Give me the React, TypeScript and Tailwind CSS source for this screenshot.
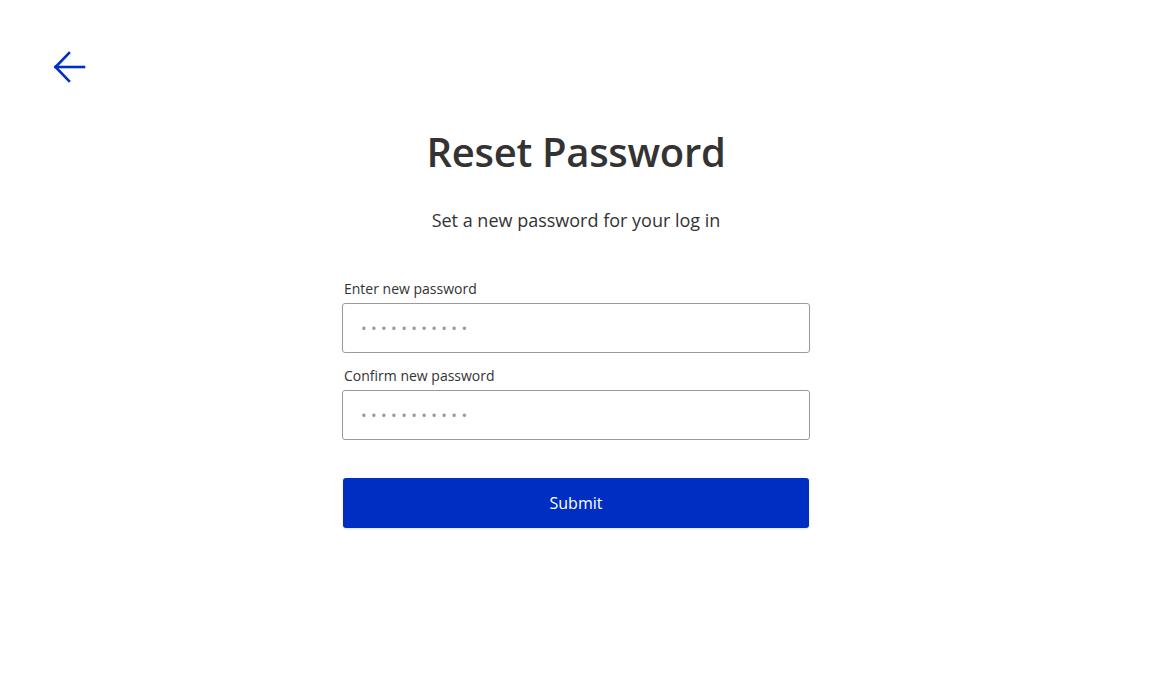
export default function App() {
  return (
    <div className="min-h-[700px] w-full bg-white text-[#333333]" style={{ fontFamily: '"Open Sans", "Noto Sans", sans-serif' }}>
      <div className="px-[53px] pt-[51px]">
        <button className="block text-[#0030c0]" aria-label="Back">
          <svg width="34" height="32" viewBox="0 0 34 32" fill="none" stroke="currentColor" strokeWidth="2.6" strokeLinecap="square">
            <path d="M2.5 16 H31" />
            <path d="M16 2 L2.5 16 L16 30" />
          </svg>
        </button>
      </div>

      <div className="flex flex-col items-center">
        <h1 className="mt-[45px] text-[40px] leading-[48px] font-semibold tracking-[-0.3px]">Reset Password</h1>
        <p className="mt-[32px] text-[18px] leading-[24px]">Set a new password for your log in</p>

        <form className="mt-[48px] flex w-[468px] flex-col" onSubmit={(e) => e.preventDefault()}>
          <label className="ml-[2px] text-[14px] leading-[18px]">Enter new password</label>
          <input
            type="text"
            placeholder="•••••••••••"
            className="mt-[5px] h-[50px] rounded-[3px] border border-[#9a9a9a] px-[18px] text-[15px] tracking-[4.4px] outline-none placeholder:text-[#999999]"
          />

          <label className="ml-[2px] mt-[14px] text-[14px] leading-[18px]">Confirm new password</label>
          <input
            type="text"
            placeholder="•••••••••••"
            className="mt-[5px] h-[50px] rounded-[3px] border border-[#9a9a9a] px-[18px] text-[15px] tracking-[4.4px] outline-none placeholder:text-[#999999]"
          />

          <button
            type="submit"
            className="mx-[1px] mt-[38px] h-[50px] rounded-[3px] bg-[#002ec2] text-[16px] font-medium text-white shadow-sm"
          >
            Submit
          </button>
        </form>
      </div>
    </div>
  )
}
